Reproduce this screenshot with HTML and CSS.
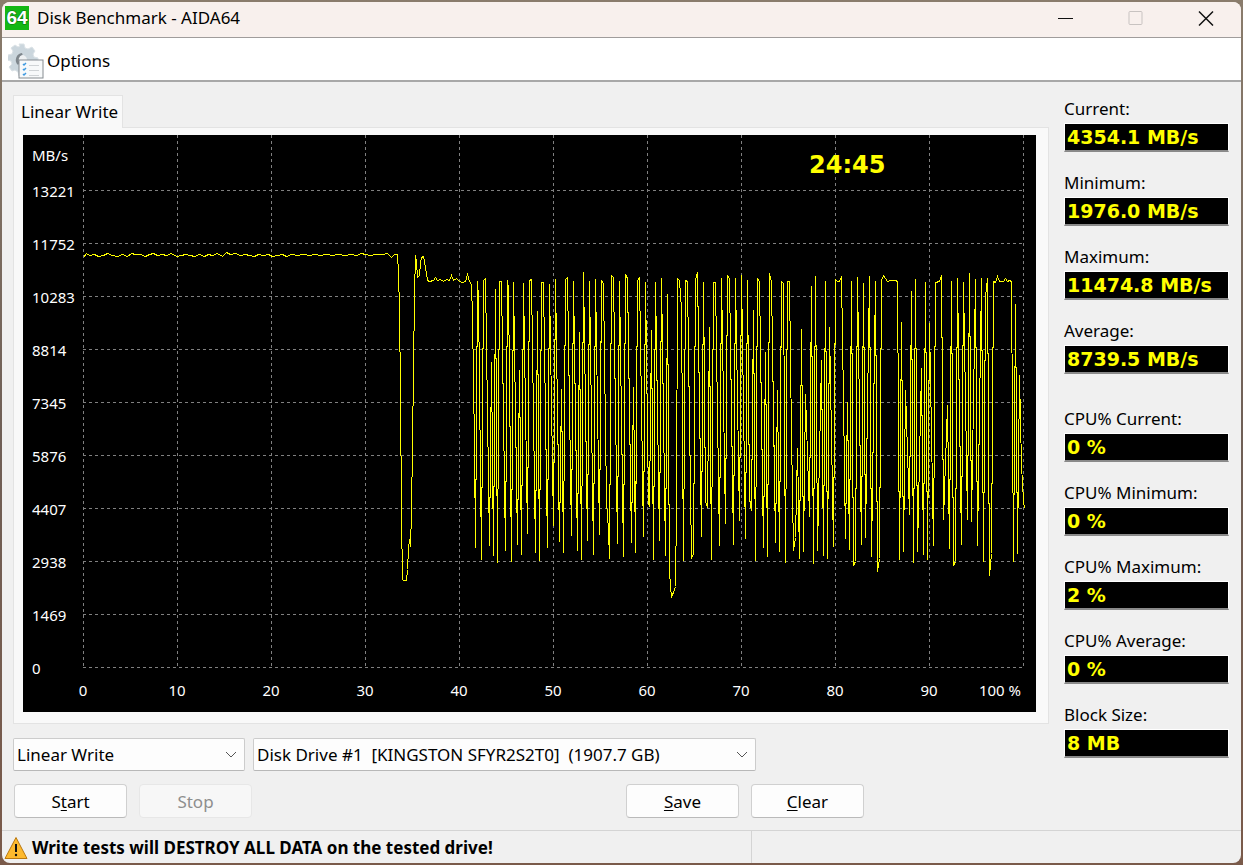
FILE: index.html
```
<!DOCTYPE html>
<html lang="en">
<head>
<meta charset="UTF-8">
<meta name="viewport" content="width=device-width, initial-scale=1.0">
<title>Disk Benchmark - AIDA64</title>
<link rel="stylesheet" href="styles.css">
</head>
<body>
<div class="window">
<header class="titlebar">
<svg class="app-icon" viewBox="0 0 24 24" aria-hidden="true">
<rect width="24" height="24" fill="#14b714"/>
<text x="12" y="18" text-anchor="middle">64</text>
</svg>
<h1>Disk Benchmark - AIDA64</h1>
<div class="window-buttons">
<button type="button" aria-label="Minimize"><svg viewBox="0 0 16 16"><path d="M0 8.5H15" stroke="#111"/></svg></button>
<button type="button" aria-label="Maximize" disabled><svg viewBox="0 0 16 16"><rect x="1" y="1.5" width="13" height="13" rx="1" stroke="#c8c3c1" fill="none"/></svg></button>
<button type="button" aria-label="Close"><svg viewBox="0 0 16 16"><path d="M1 1.5L15 15.5M15 1.5L1 15.5" stroke="#111" stroke-width="1.5"/></svg></button>
</div>
</header>

<nav class="menubar">
<button type="button" class="menu-item">
<svg class="options-icon" viewBox="0 0 36 36" aria-hidden="true">
<path d="M11 1h5l1 4 3 1 4-2 3 4-2 3 1 3 4 1v5l-4 1-1 3 2 4-4 3-3-2-3 1-1 4-5-1-1-4-3-2-3 1-3-4 3-3-1-3-4-1 1-5 4-1 1-3-2-3 4-3 3 2 2-1z" fill="#cbd6dd" stroke="#dbe2e6"/>
<path d="M14 10a7 7 0 0 0-4 12l2-3a4 4 0 0 1 3-6z" fill="#7e868c"/>
<path d="M14 12a5 5 0 0 0-2 8h7v-3a5 5 0 0 0-5-5z" fill="#eef1f3"/>
<rect x="11" y="17" width="24" height="18" fill="#f7f9fa" stroke="#868c91"/>
<path d="M15 21l1 1 2-2M15 26l1 1 2-2M15 31l1 1 2-2" fill="none" stroke="#3f9ae0" stroke-width="1.5"/>
<path d="M21 22.5h10M21 27.5h10M21 32.5h10" stroke="#cfd3d6"/>
</svg>
<span>Options</span>
</button>
</nav>

<main class="content">
<section class="left">
<div class="tabs" role="tablist">
<button type="button" class="tab" role="tab" aria-selected="true">Linear Write</button>
</div>
<div class="panel" role="tabpanel">
<svg class="chart" viewBox="23 135 1013 577" role="img" aria-label="Linear write speed in MB/s over drive position">
<g class="grid">
<path d="M83.5 135V667M177.5 135V667M271.5 135V667M365.5 135V667M459.5 135V667M553.5 135V667M647.5 135V667M741.5 135V667M835.5 135V667M929.5 135V667M1023.5 135V667"/>
<path d="M83 190.5H1023M83 243.5H1023M83 296.5H1023M83 349.5H1023M83 402.5H1023M83 455.5H1023M83 508.5H1023M83 561.5H1023M83 614.5H1023M83 667.5H1023"/>
</g>
<polyline class="trace" transform="translate(0.5 0.5)" points="
83,257 86,253 89,255 94,254 98,256 103,255 107,253 112,255 117,256 122,254 127,256 131,253 135,254 140,254 145,256 149,254 153,253 157,255
162,254 166,255 171,253 176,256 181,255 185,254 190,255 194,256 199,254 204,256 208,254 212,255 217,253 222,256 226,252 230,254 235,253 240,255
245,254 249,255 254,256 258,254 263,255 268,254 272,256 277,255 282,254 286,256 291,254 297,255 303,254 309,255 314,254 320,255 326,254 332,255
338,254 345,255 351,254 356,255 361,253 365,254 370,255 376,254 382,254 387,253 391,257 394,254 397,254
398,273 399,309 400,391 401,517 402,579 403,580 406,580 407,569 408,549 409,539 410,546 411,512 412,443 413,370 414,294 415,255 416,261 417,277 419,275 420,262 421,257 423,256
425,267 427,280 429,281 433,280 435,277 437,280 440,279 443,281 446,279 449,280 451,275 453,280 456,278 459,281 462,282 465,281 467,274 469,281
471,284 472,316 473,380 474,445 475,547 477,281 478,297 481,559 483,280 485,278 489,545 491,362 493,555 495,289 497,562 499,281 501,281
505,550 507,280 508,288 511,561 513,282 517,544 519,370 521,554 523,283 527,533 529,280 531,279 535,552 537,311 539,560 541,282 543,282
547,547 549,284 553,525 555,279 559,541 561,389 563,552 565,279 567,277 571,535 573,281 577,550 579,332 581,559 583,272 587,540 589,281
593,554 595,279 599,534 601,280 603,283 606,501 608,530 609,558 611,275 613,277 617,543 619,281 623,556 625,274 627,278 631,542 633,387
635,552 637,280 639,277 643,536 645,282 648,502 649,506 651,330 653,559 655,282 659,540 661,278 665,555 667,294 669,570 670,587 671,596
673,592 675,586 676,508 677,278 679,280 681,308 683,560 685,280 687,281 691,558 693,553 695,279 697,272 701,536 703,282 705,501 707,507
709,327 711,559 713,282 715,282 719,545 721,278 725,523 727,275 729,278 733,544 735,278 739,520 741,275 745,538 747,280 749,498 751,510
753,310 755,560 757,278 759,281 763,547 765,352 767,556 769,273 771,282 775,542 777,390 779,551 781,281 783,283 785,562 787,281 789,281
791,435 793,550 795,537 797,448 799,558 801,329 803,551 805,394 809,516 811,286 813,563 815,276 817,550 821,360 823,555 825,281 827,558
829,327 833,546 835,279 837,281 839,281 841,276 843,400 845,538 847,402 849,549 851,281 853,565 855,561 857,277 861,544 863,283 865,537
869,276 871,556 875,281 877,571 879,558 881,280 883,275 885,278 887,281 890,280 896,280 897,282 899,559 901,322 903,551 905,390 909,514
911,291 913,562 915,279 917,551 921,368 923,554 925,282 927,559 929,323 933,545 935,282 939,281 941,275 943,519 947,405 949,548 951,281
953,565 955,561 957,278 961,544 963,282 967,519 969,273 971,521 975,279 977,545 981,278 983,561 985,296 987,278 989,575 991,553 993,281
995,282 997,276 999,281 1003,281 1005,278 1007,281 1009,280 1011,281 1013,561 1015,304 1017,553 1019,375 1021,465 1023,500 1024,508"/>
<g class="axis">
<text x="32" y="161">MB/s</text>
<text x="32" y="197">13221</text>
<text x="32" y="250">11752</text>
<text x="32" y="303">10283</text>
<text x="32" y="356">8814</text>
<text x="32" y="409">7345</text>
<text x="32" y="462">5876</text>
<text x="32" y="515">4407</text>
<text x="32" y="568">2938</text>
<text x="32" y="621">1469</text>
<text x="32" y="674">0</text>
</g>
<g class="axis axis-x">
<text x="83" y="696">0</text>
<text x="177" y="696">10</text>
<text x="271" y="696">20</text>
<text x="365" y="696">30</text>
<text x="459" y="696">40</text>
<text x="553" y="696">50</text>
<text x="647" y="696">60</text>
<text x="741" y="696">70</text>
<text x="835" y="696">80</text>
<text x="929" y="696">90</text>
<text x="1000" y="696">100 %</text>
</g>
<text class="timer" x="809" y="173">24:45</text>
</svg>
</div>

<div class="selects">
<div class="combo combo-test">
<select aria-label="Test"><option>Linear Write</option></select>
<svg viewBox="0 0 12 8" aria-hidden="true"><path d="M1 1l5 5 5-5"/></svg>
</div>
<div class="combo combo-drive">
<select aria-label="Drive"><option>Disk Drive #1&nbsp; [KINGSTON SFYR2S2T0]&nbsp; (1907.7 GB)</option></select>
<svg viewBox="0 0 12 8" aria-hidden="true"><path d="M1 1l5 5 5-5"/></svg>
</div>
</div>

<div class="actions">
<button type="button" class="btn">S<u>t</u>art</button>
<button type="button" class="btn" disabled>Stop</button>
<button type="button" class="btn btn-save"><u>S</u>ave</button>
<button type="button" class="btn"><u>C</u>lear</button>
</div>
</section>

<aside class="stats">
<div class="stat"><label for="cur">Current:</label><input id="cur" type="text" value="4354.1 MB/s" readonly></div>
<div class="stat"><label for="min">Minimum:</label><input id="min" type="text" value="1976.0 MB/s" readonly></div>
<div class="stat"><label for="max">Maximum:</label><input id="max" type="text" value="11474.8 MB/s" readonly></div>
<div class="stat"><label for="avg">Average:</label><input id="avg" type="text" value="8739.5 MB/s" readonly></div>
<div class="stat stat-cpu"><label for="cpuCur">CPU% Current:</label><input id="cpuCur" type="text" value="0 %" readonly></div>
<div class="stat"><label for="cpuMin">CPU% Minimum:</label><input id="cpuMin" type="text" value="0 %" readonly></div>
<div class="stat"><label for="cpuMax">CPU% Maximum:</label><input id="cpuMax" type="text" value="2 %" readonly></div>
<div class="stat"><label for="cpuAvg">CPU% Average:</label><input id="cpuAvg" type="text" value="0 %" readonly></div>
<div class="stat"><label for="block">Block Size:</label><input id="block" type="text" value="8 MB" readonly></div>
</aside>
</main>

<footer class="statusbar">
<div class="status-message">
<svg viewBox="0 0 24 24" aria-hidden="true">
<path d="M12 1.500L23 22.500H1z" fill="#fdb92e" stroke="#b9770f" stroke-linejoin="round"/>
<path d="M12 8v8" stroke="#111" stroke-width="2"/>
<circle cx="12" cy="19" r="1.200" fill="#111"/>
</svg>
<strong>Write tests will DESTROY ALL DATA on the tested drive!</strong>
</div>
</footer>
</div>
</body>
</html>
```
FILE: styles.css
```
* {
  box-sizing: border-box;
}

body {
  margin: 0;
  padding: 2px;
  background: linear-gradient(#8a7c6c, #6f5f56 50%, #7a5a4a);
  color: #000;
  font-family: "Noto Sans", "Open Sans", sans-serif;
  font-size: 17px;
  line-height: 24px;
}

button, select, input {
  font: inherit;
  color: inherit;
}

.window {
  display: flex;
  flex-direction: column;
  min-height: calc(100vh - 4px);
  background: #f0f0f0;
  border-radius: 8px;
  overflow: hidden;
}

/* title bar */
.titlebar {
  display: flex;
  align-items: center;
  height: 36px;
  padding: 0 0 3px 3px;
  background: #f8f0ed;
  border-bottom: 1px solid #a09c9b;
}
.titlebar h1 {
  flex: 1;
  margin: 0 0 0 8px;
  font-size: 17px;
  font-weight: 400;
}
.app-icon {
  width: 24px;
  height: 24px;
}
.app-icon text {
  fill: #fff;
  stroke: #0c6e0c;
  paint-order: stroke;
  font: bold 19px "Liberation Sans", sans-serif;
}
.window-buttons {
  display: flex;
}
.window-buttons button {
  display: grid;
  place-items: center;
  width: 70px;
  height: 32px;
  padding: 0;
  border: 0;
  background: none;
}
.window-buttons svg {
  width: 16px;
  height: 16px;
}

/* menu */
.menubar {
  height: 44px;
  padding-left: 6px;
  background: #fff;
  border-bottom: 2px solid #a8a8a8;
}
.menu-item {
  display: flex;
  align-items: center;
  gap: 3px;
  height: 43px;
  padding: 3px 0 0;
  border: 0;
  background: none;
}
.options-icon {
  width: 36px;
  height: 36px;
}

.content {
  flex: 1;
  display: flex;
  gap: 15px;
  padding: 13px 12px 12px 11px;
}
.left {
  flex: 1;
  min-width: 0;
}

/* tab and chart */
.tabs {
  display: flex;
}
.tab {
  position: relative;
  height: 33px;
  margin-bottom: -1px;
  padding: 0 4px 0 7px;
  border: 1px solid #e3e3e3;
  border-bottom: 0;
  background: #f9f9f9;
}
.panel {
  padding: 7px 12px 11px 9px;
  border: 1px solid #e3e3e3;
  background: #f9f9f9;
}
.chart {
  display: block;
  width: 100%;
  height: auto;
  background: #000;
}
.grid path {
  fill: none;
  stroke: #808080;
  stroke-dasharray: 3 3;
  shape-rendering: crispEdges;
}
.trace {
  fill: none;
  stroke: #ff0;
  shape-rendering: crispEdges;
}
.axis {
  fill: #fff;
  font-size: 15px;
}
.axis-x {
  text-anchor: middle;
}
.timer {
  fill: #ff0;
  font: bold 24px "DejaVu Sans", sans-serif;
}

/* controls under the chart */
.selects {
  display: flex;
  gap: 8px;
  margin-top: 14px;
}
.combo {
  position: relative;
}
.combo-test {
  width: 232px;
}
.combo-drive {
  width: 503px;
}
.combo select {
  display: block;
  width: 100%;
  height: 33px;
  padding: 1px 28px 0 3px;
  border: 1px solid #ccc;
  border-bottom-color: #b8b8b8;
  border-radius: 2px;
  background: #fdfdfd;
  appearance: none;
}
.combo svg {
  position: absolute;
  top: 13px;
  right: 8px;
  width: 12px;
  height: 8px;
  fill: none;
  stroke: #555;
  pointer-events: none;
}
.actions {
  display: flex;
  gap: 12px;
  margin-top: 13px;
  padding: 0 185px 0 1px;
}
.btn {
  width: 113px;
  height: 34px;
  padding: 1px 0 0;
  border: 1px solid #d0d0d0;
  border-bottom-color: #bababa;
  border-radius: 4px;
  background: #fdfdfd;
}
.btn:disabled {
  border-color: #e7e7e7;
  background: #f7f7f7;
  color: #8e8e8e;
}
.btn-save {
  margin-left: auto;
}
.btn u {
  text-underline-offset: 2px;
}

/* readouts */
.stats {
  width: 165px;
  padding-top: 2px;
}
.stat {
  margin-bottom: 19px;
}
.stat-cpu {
  margin-top: 33px;
}
.stat label {
  display: block;
  height: 26px;
}
.stat input {
  display: block;
  width: 100%;
  height: 29px;
  padding: 0 2px;
  border: 1px solid #fff;
  border-width: 1px 1px 2px;
  border-bottom-color: #8a8a8a;
  background: #000;
  color: #ff0;
  font: bold 19px "DejaVu Sans", sans-serif;
}

.statusbar {
  display: flex;
  height: 33px;
  border-top: 1px solid #d4d4d4;
}
.status-message {
  display: flex;
  align-items: center;
  gap: 4px;
  width: 750px;
  padding: 2px 0 0 2px;
  border-right: 1px solid #d4d4d4;
}
.status-message svg {
  width: 24px;
  height: 24px;
}
```
